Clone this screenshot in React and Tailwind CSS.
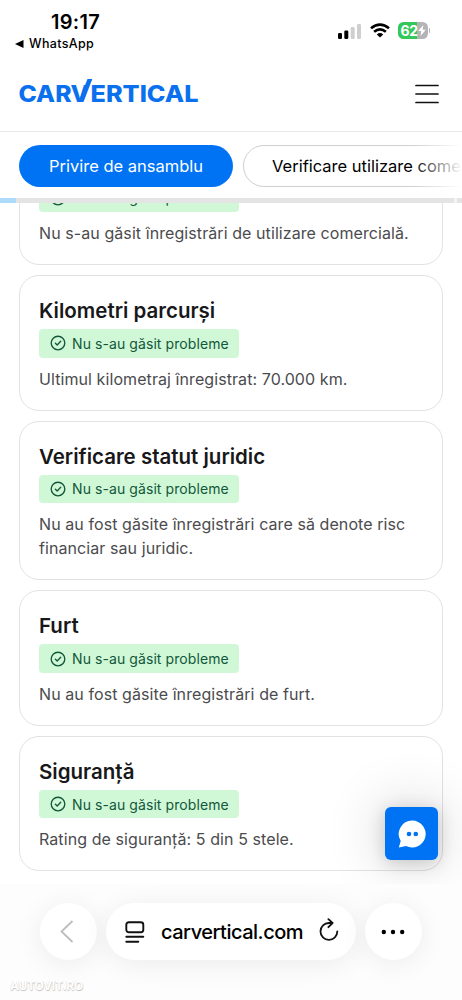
import React from "react";

const BADGE = "Nu s-au găsit probleme";

function Badge() {
  return (
    <div className="mt-[5px] flex h-[28.5px] w-[200px] items-center rounded-[4px] bg-[#d0f8d7] pl-[11px] text-[#12573a]">
      <svg width="16" height="16" viewBox="0 0 16 16" fill="none" stroke="currentColor" strokeWidth="1.35" strokeLinecap="round" strokeLinejoin="round">
        <circle cx="8" cy="8" r="6.8" />
        <path d="M5.4 8.2l1.8 1.8 3.5-3.7" />
      </svg>
      <span className="ml-[6px] whitespace-nowrap text-[14px] tracking-[0.08px]">{BADGE}</span>
    </div>
  );
}

function Card({ title, lines, className = "" }) {
  return (
    <section className={`shrink-0 rounded-[20px] border border-[#e2e2e3] bg-white pt-[22px] pb-[19px] pl-[19px] ${className}`}>
      <h2 className="h-[26px] whitespace-nowrap text-[20.5px] font-semibold leading-[26px] tracking-[0px] text-[#18181a]">{title}</h2>
      <Badge />
      <div className="mt-[9px] text-[16px] leading-6 tracking-[0.08px] text-[#4b4b4e]">
        {lines.map((l) => (
          <p key={l} className="whitespace-nowrap">{l}</p>
        ))}
      </div>
    </section>
  );
}

function StatusBar() {
  return (
    <div className="flex h-[54px] justify-between">
      <div className="pt-[10px]">
        <div className="pl-[51px] text-[20px] font-semibold leading-[24px] tracking-[0.3px]">19:17</div>
        <div className="flex items-center pl-[15px] pt-[2px] text-[12.5px] font-medium leading-[16px]">
          <svg width="9" height="8" viewBox="0 0 9 8"><path d="M0 4L8.5 0v8z" /></svg>
          <span className="ml-[5px] tracking-[0.35px]">WhatsApp</span>
        </div>
      </div>
      <div className="mt-[22px] flex h-[17px] items-center pr-[32px]">
        <svg width="24" height="16" viewBox="0 0 24 16">
          <rect x="0" y="10" width="4" height="6" rx="1.3" />
          <rect x="6.3" y="7.5" width="4" height="8.5" rx="1.3" />
          <rect x="12.7" y="4" width="4" height="12" rx="1.3" fill="#cfcfcf" />
          <rect x="19" y="1" width="4" height="15" rx="1.3" fill="#cfcfcf" />
        </svg>
        <svg className="ml-[8px]" width="20" height="15" viewBox="0 0 20 15" fill="none" stroke="#000" strokeWidth="2.7">
          <path d="M1 5.3Q10-2.1 19 5.3" />
          <path d="M4.1 8.7Q10 4 15.9 8.7" />
          <path d="M6.8 11.4Q10 8.6 13.2 11.4L10 14.6z" fill="#000" stroke="none" />
        </svg>
        <div className="ml-[8px] flex h-[17px] w-[30px] items-center rounded-[5.5px] bg-[linear-gradient(90deg,#34c759_63%,#b4b4b6_63%)] pl-[3px] text-[14px] font-bold leading-[17px] text-white">
          <span className="tracking-[-0.3px]">62</span>
          <svg className="shrink-0" width="8" height="11" viewBox="0 0 8 11" fill="#fff"><path d="M5.3 0L.2 6h3L2.6 11 7.8 4.8h-3z" /></svg>
        </div>
        <div className="ml-[1px] h-[5px] w-[1.5px] rounded-r-full bg-[#b4b4b6]" />
      </div>
    </div>
  );
}

function Header() {
  return (
    <div className="flex h-[78px] items-center justify-between border-b border-[#e9e9ea] pl-[18px] pr-[23px]">
      <svg width="182" height="28" viewBox="0 0 182 28" fill="#0b70ee" fontFamily="Inter, sans-serif" fontWeight="800" fontSize="22.5">
        <text y="22.8">
          <tspan x="0.5" textLength="53" lengthAdjust="spacingAndGlyphs">CAR</tspan>
          <tspan x="52.5" textLength="18.5" lengthAdjust="spacingAndGlyphs">V</tspan>
          <tspan x="72.5" textLength="108" lengthAdjust="spacingAndGlyphs">ERTICAL</tspan>
        </text>
        <path d="M60.5 22.8L70 -1.3h4.8l-9.2 24.1z" />
      </svg>
      <svg className="mt-[2px]" width="24" height="22" viewBox="0 0 24 22" stroke="#111" strokeWidth="1.7" strokeLinecap="round">
        <path d="M1 2.5h22M1 11h22M1 19.5h22" />
      </svg>
    </div>
  );
}

export default function App() {
  return (
    <div className="flex h-[1000px] w-[462px] flex-col overflow-hidden bg-white font-[Inter,'Noto_Sans',sans-serif] text-black">
      <StatusBar />
      <Header />
      <nav className="relative flex h-[66px] shrink-0 items-start gap-[10px] overflow-hidden pl-[19px] pt-[12.5px] text-[16.5px]">
        <div className="flex h-[42.5px] w-[214px] shrink-0 items-center justify-center whitespace-nowrap rounded-full bg-[#0073f5] pt-px text-white">Privire de ansamblu</div>
        <div className="flex h-[42.5px] w-[300px] shrink-0 items-center whitespace-nowrap rounded-full border border-[#cfcfd1] pl-[28px] pt-px">Verificare utilizare comercială</div>
        <div className="absolute right-0 top-0 h-[66px] w-[50px] bg-gradient-to-r from-white/0 to-white" />
      </nav>
      <div className="flex h-[5px] shrink-0 bg-[#e4e4e5]">
        <div className="w-[16px] bg-[#addafb]" />
        <div className="ml-[438px] w-[3px] bg-[#f3f3f3]" />
      </div>
      <main className="relative flex h-[681px] shrink-0 flex-col gap-[10.1px] overflow-hidden px-[19px]">
        <Card className="-mt-[73.5px]" title="Utilizare comercială" lines={["Nu s-au găsit înregistrări de utilizare comercială."]} />
        <Card title="Kilometri parcurși" lines={["Ultimul kilometraj înregistrat: 70.000 km."]} />
        <Card title="Verificare statut juridic" lines={["Nu au fost găsite înregistrări care să denote risc", "financiar sau juridic."]} />
        <Card title="Furt" lines={["Nu au fost găsite înregistrări de furt."]} />
        <Card title="Siguranță" lines={["Rating de siguranță: 5 din 5 stele."]} />
        <div className="absolute left-[385px] top-[604px] flex size-[53px] items-center justify-center rounded-[6px] bg-[#0073f5] shadow-[0_0_60px_rgba(0,0,0,0.2),0_3px_18px_rgba(0,0,0,0.18)]">
          <svg width="28" height="28" viewBox="0 0 28 28">
            <path d="M14.2.6a13.4 13.4 0 1 1-6.1 25.3L.8 27.6 2.7 21A13.4 13.4 0 0 1 14.2.6z" fill="#fff" />
            <circle cx="11" cy="14" r="2.3" fill="#0073f5" />
            <circle cx="17.8" cy="14" r="2.3" fill="#0073f5" />
          </svg>
        </div>
      </main>
      <footer className="relative flex h-[116px] shrink-0 items-start gap-[9px] bg-[#fdfdfd] pl-[40px] pt-[19px]">
        <div className="flex size-[57px] items-center justify-center rounded-full bg-white shadow-[0_4px_28px_rgba(0,0,0,0.07)]">
          <svg className="-ml-[3px]" width="14" height="23" viewBox="0 0 14 23" fill="none" stroke="#bdbdbd" strokeWidth="1.8"><path d="M12.5 1L1.5 11.5l11 10.5" /></svg>
        </div>
        <div className="flex h-[57px] w-[250px] items-center rounded-full bg-white pl-[19px] shadow-[0_4px_28px_rgba(0,0,0,0.07)]">
          <svg width="20" height="22" viewBox="0 0 20 22" fill="none" stroke="#111" strokeWidth="1.9" strokeLinecap="round">
            <rect x="1.3" y="1.2" width="17" height="10" rx="2.5" />
            <path d="M1.3 15.8h17M1.3 20.7h12" />
          </svg>
          <span className="ml-[16px] w-[143px] whitespace-nowrap text-[20px] font-medium tracking-[-0.5px]">carvertical.com</span>
          <svg className="-mt-[3px] ml-[15px]" width="20" height="24" viewBox="0 0 20 24" fill="none" stroke="#111" strokeWidth="1.8" strokeLinecap="round" strokeLinejoin="round">
            <path d="M18.3 13.3A8.4 8.4 0 1 1 10 5h3.5M9.4 1.2L13.6 5 9.4 9.2" />
          </svg>
        </div>
        <div className="flex size-[57px] items-center justify-center rounded-full bg-white shadow-[0_4px_28px_rgba(0,0,0,0.07)]">
          <svg className="-ml-px" width="24" height="6" viewBox="0 0 24 6"><circle cx="2.8" cy="3" r="2.2" /><circle cx="12" cy="3" r="2.2" /><circle cx="21.2" cy="3" r="2.2" /></svg>
        </div>
        <div className="absolute left-[10px] top-[94px] text-[12px] font-bold leading-[16px] tracking-[-0.2px] text-white [text-shadow:0.5px_0.5px_1px_#c4c4c4,-0.5px_-0.5px_0.5px_#ddd]">AUTOVIT.RO</div>
      </footer>
    </div>
  );
}
